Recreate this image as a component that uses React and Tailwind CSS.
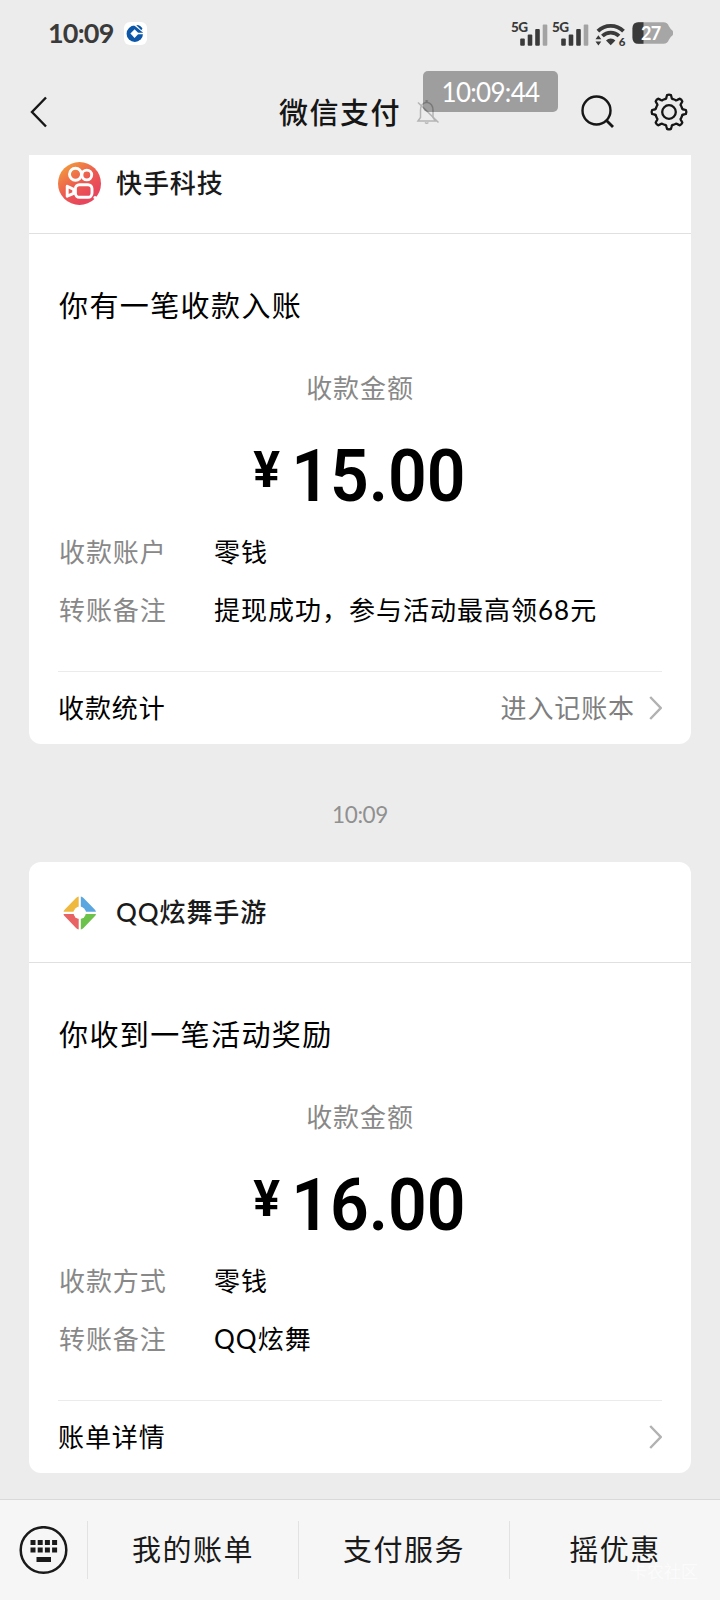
import { useState } from "react";

const messages = [
  {
    id: 1,
    brand: "kuaishou",
    name: "快手科技",
    title: "你有一笔收款入账",
    amount: "15.00",
    rows: [
      { label: "收款账户", value: "零钱" },
      { label: "转账备注", value: "提现成功，参与活动最高领68元" },
    ],
    footer: "收款统计",
    link: "进入记账本",
  },
  {
    id: 2,
    time: "10:09",
    brand: "qq",
    name: "QQ炫舞手游",
    title: "你收到一笔活动奖励",
    amount: "16.00",
    rows: [
      { label: "收款方式", value: "零钱" },
      { label: "转账备注", value: "QQ炫舞" },
    ],
    footer: "账单详情",
  },
];

const menus = ["我的账单", "支付服务", "摇优惠"];

// outline of the settings gear, 8 teeth around (20, 20)
function gearPath() {
  let d = "";
  for (let i = 0; i < 8; i++) {
    const at = (a, r) => {
      const t = ((i * 45 - 90 + a) * Math.PI) / 180;
      return `${(20 + r * Math.cos(t)).toFixed(2)} ${(20 + r * Math.sin(t)).toFixed(2)}`;
    };
    // tooth side, rounded tip, side, then the curved valley to the next tooth
    d += `${i === 0 ? "M" : "L"}${at(-9.5, 15.2)}L${at(-6.5, 17)}Q${at(0, 17.8)} ${at(6.5, 17)}L${at(9.5, 15.2)}Q${at(12, 13.2)} ${at(17, 13.6)}L${at(28, 13.6)}Q${at(33, 13.2)} ${at(35.5, 15.2)}`;
  }
  return `${d}Z`;
}

function Signal() {
  return (
    <svg width="41" height="28" viewBox="0 0 41 28" className="shrink-0">
      <text x="0" y="12.5" fontSize="13.5" fontWeight="900" fill="#3a3a3a" fontFamily="Lato, sans-serif" textLength="17">5G</text>
      <rect x="9.2" y="19.5" width="4.6" height="7.3" rx="1" fill="#3a3a3a" />
      <rect x="16.7" y="15.5" width="4.6" height="11.3" rx="1" fill="#3a3a3a" />
      <rect x="24.2" y="10" width="4.6" height="16.8" rx="1" fill="#3a3a3a" />
      <rect x="31.7" y="5.5" width="4.6" height="21.3" rx="1" fill="#a3a3a3" />
    </svg>
  );
}

function Wifi() {
  return (
    <svg width="32" height="30" viewBox="0 0 32 30" className="shrink-0">
      <g fill="none" stroke="#3a3a3a" strokeWidth="3.8">
        <path d="M2.9 13.2a18.2 18.2 0 0 1 25.6 0" />
        <path d="M7.4 18a11.8 11.8 0 0 1 16.6 0" />
      </g>
      <path d="M11 22.4a6.6 6.6 0 0 1 9.4 0l-4.7 4.8z" fill="#3a3a3a" />
      <path d="M0.5 21.2l2.9-3.9 2.9 3.9zM0.5 23.5l2.9 3.9 2.9-3.9z" fill="#3a3a3a" />
      <text x="23.8" y="28.3" fontSize="11.5" fontWeight="900" fill="#3a3a3a" fontFamily="Lato, sans-serif">6</text>
    </svg>
  );
}

function Battery() {
  return (
    <div className="relative w-[41px] h-[22px] shrink-0">
      <svg width="41" height="22" viewBox="0 0 41 22">
        <path d="M6.5 0.3h25q4 0 5.4 4l2 3q2.3 1 2.3 3.7t-2.3 3.7l-2 3q-1.4 4-5.4 4h-25q-6 0-6-6v-9.4q0-6 6-6z" fill="#a6a6a6" />
        <path d="M11.5 0.3h-5q-6 0-6 6v9.4q0 6 6 6h5z" fill="#3a3a3a" />
      </svg>
      <span className="absolute left-[9px] top-0 text-[18px] leading-[22px] tracking-[-0.6px] font-bold text-white font-['Lato',sans-serif]">27</span>
    </div>
  );
}

function BankIcon() {
  return (
    <svg width="23" height="23" viewBox="0 0 23 23">
      <rect width="23" height="23" rx="6" fill="#fff" />
      <circle cx="10.8" cy="11.8" r="8.2" fill="#0b56a6" />
      <path d="M10.6 7.3l4.2 4.3-4.2 4.3-4.2-4.3z" fill="#fff" />
      <path d="M10.5 2.6l8.5 7.2M14 11.6h6" stroke="#fff" strokeWidth="1.5" />
      <path d="M12.3 3q4.2-.3 6.2 3.8l-1.4 1.2z" fill="#0b56a6" />
    </svg>
  );
}

function MutedBell() {
  return (
    <svg width="24" height="26" viewBox="0 0 24 26" fill="none" stroke="#b4b4b4" strokeWidth="1.5">
      <path d="M2 22l2.5-3.5v-7q0-7.5 6.2-8.3q6.3.8 6.3 8.3v7l2.5 3.5zM9 23.5q1.7 1.5 3.4 0M9.5 2.5q1.2-1.5 2.4 0" />
      <path d="M2 3.5l20.5 20" />
    </svg>
  );
}

function BrandLogo({ brand }) {
  if (brand === "qq") {
    return (
      <svg width="44" height="44" viewBox="0 0 44 44">
        <path d="M20.7 5.5v15.2H5.5q.3-1.5 1.5-2.5L18 7q1.2-1.3 2.7-1.5z" fill="#efb93f" />
        <path d="M22.8 5.5v15.2H38q-.3-1.5-1.5-2.5L25.5 7q-1.2-1.3-2.7-1.5z" fill="#5ba6e0" />
        <path d="M20.7 38.5V22.9H5.5q.3 1.5 1.5 2.5L18 36.9q1.2 1.3 2.7 1.6z" fill="#e86464" />
        <path d="M22.8 38.5V22.9H38q-.3 1.5-1.5 2.5L25.5 36.9q-1.2 1.3-2.7 1.6z" fill="#6cc24a" />
        <circle cx="21.7" cy="21.8" r="6.2" fill="#fff" />
      </svg>
    );
  }
  return (
    <svg width="44" height="44" viewBox="0 0 44 44">
      <defs>
        <linearGradient id="ks" x1="0.1" y1="0.1" x2="0.65" y2="0.85">
          <stop offset="0" stopColor="#f29a3c" />
          <stop offset="0.6" stopColor="#ec5a50" />
          <stop offset="1" stopColor="#e8465c" />
        </linearGradient>
      </defs>
      <circle cx="21.5" cy="21.5" r="21.5" fill="url(#ks)" />
      <g fill="none" stroke="#fff" strokeWidth="2.9" strokeLinejoin="round">
        <circle cx="17.5" cy="12.3" r="6" />
        <circle cx="28.8" cy="13" r="4.9" />
        <rect x="17.4" y="22.7" width="16.6" height="12.6" rx="4" />
        <path d="M9.2 24.2l6.5 3.2v4l-6.5 2.8z" />
      </g>
      <circle cx="37" cy="35.5" r="1.6" fill="#fff" />
    </svg>
  );
}

function Chevron() {
  return (
    <svg width="14" height="24" viewBox="0 0 14 24" fill="none" stroke="#b2b2b2" strokeWidth="2.4">
      <path d="M2.2 1l10.5 11L2.2 23" />
    </svg>
  );
}

function PayCard({ msg }) {
  return (
    <div className="h-[611px] bg-white rounded-xl text-[26px] tracking-[0.9px] text-black flex flex-col">
      <div className="h-[101px] pt-px shrink-0 flex items-center gap-[15px] pl-[29px] border-b border-[#e0e0e0] text-[#1a1a1a]">
        <BrandLogo brand={msg.brand} />
        <span className="leading-10 -mt-px -ml-px font-medium">{msg.name}</span>
      </div>

      <div className="pl-[30px] mt-[52px] h-10 leading-10 text-[29px] tracking-[1.4px]">{msg.title}</div>
      <div className="mt-[42px] h-10 leading-10 text-center text-[#888]">收款金额</div>

      <div className="mt-[30px] h-[76px] flex justify-center font-['Roboto',sans-serif] tracking-normal">
        <span className="text-[50px] leading-[64px] font-bold mr-[11px]">¥</span>
        <span className="text-[73px] leading-[76px] font-semibold origin-right scale-x-93 -ml-[13px] mr-px">{msg.amount}</span>
      </div>

      <div className="mt-[9px] pl-[30px]">
        {msg.rows.map(row => (
          <div key={row.label} className="flex h-[58px] leading-[58px]">
            <span className="w-[155px] text-[#888]">{row.label}</span>
            <span className="tracking-[1px]">{row.value}</span>
          </div>
        ))}
      </div>

      <div className="mx-[29px] mt-auto h-[73px] shrink-0 border-t border-[#ebebeb] flex items-center justify-between">
        <span className="leading-10">{msg.footer}</span>
        <div className="flex items-center gap-[13px] text-[#7f7f7f]">
          {msg.link && <span className="leading-10">{msg.link}</span>}
          <Chevron />
        </div>
      </div>
    </div>
  );
}

export default function App() {
  const [list] = useState(messages);

  return (
    <div className="w-[720px] h-[1600px] bg-[#ececec] overflow-hidden flex flex-col font-['Lato','Noto_Sans_CJK_SC',sans-serif]">
      {/* Status bar */}
      <div className="h-[66px] shrink-0 flex items-center justify-between pl-[48px] pr-[47px]">
        <div className="flex items-center gap-[10px]">
          <span className="text-[27px] leading-8 tracking-[-0.8px] font-bold text-[#3a3a3a] w-[66px]">10:09</span>
          <BankIcon />
        </div>
        <div className="flex items-center">
          <Signal />
          <Signal />
          <div className="ml-0.5">
            <Wifi />
          </div>
          <div className="ml-[5px]">
            <Battery />
          </div>
        </div>
      </div>

      {/* Nav bar */}
      <div className="relative h-[89px] pt-[3px] shrink-0 flex items-center justify-between pl-[29px] pr-[31px] text-[#161616]">
        <svg width="20" height="32" viewBox="0 0 20 32" fill="none" stroke="currentColor" strokeWidth="2.4">
          <path d="M17 1.5L3 16L17 30.5" />
        </svg>
        <h1 className="absolute left-[279px] top-[27px] text-[29px] leading-10 tracking-[1.5px] font-medium">微信支付</h1>
        <div className="absolute left-[416px] top-[33px]">
          <MutedBell />
        </div>
        <div className="absolute left-[423px] top-[5px] w-[135px] h-[41px] rounded-[5px] bg-black/33 text-white text-[26px] leading-[42px] tracking-[-0.7px] text-center">
          10:09:44
        </div>
        <div className="flex items-center gap-[33px]">
          <svg width="36" height="36" viewBox="0 0 36 36" fill="none" stroke="currentColor" strokeWidth="2.4">
            <circle cx="16.5" cy="16.5" r="14" />
            <path d="M26.5 26.5l6.5 6.5" strokeWidth="2.8" />
          </svg>
          <svg width="40" height="40" viewBox="0 0 40 40" fill="none" stroke="currentColor" strokeWidth="2.3" strokeLinejoin="round">
            <path d={gearPath()} />
            <circle cx="20" cy="20" r="6.8" />
          </svg>
        </div>
      </div>

      {/* Messages */}
      <div className="flex-1 min-h-0 overflow-hidden px-[29px]">
        <div className="-mt-[22px]">
          {list.map(msg => (
            <div key={msg.id}>
              {msg.time && (
                <div className="h-[118px] pt-[55px] leading-8 text-center text-[22.5px] tracking-[-0.4px] text-[#909090]">{msg.time}</div>
              )}
              <PayCard msg={msg} />
            </div>
          ))}
        </div>
      </div>

      {/* Bottom menu */}
      <div className="relative h-[101px] shrink-0 bg-[#f6f6f6] border-t border-[#d9d9d9] flex items-center text-[#1a1a1a]">
        <div className="w-[87px] pl-[19px]">
          <svg width="49" height="49" viewBox="0 0 49 49">
            <circle cx="24.5" cy="24" r="22.8" fill="none" stroke="currentColor" strokeWidth="2.5" />
            {[11.5, 18.7, 25.9, 33.1].map(x => (
              <g key={x} fill="currentColor">
                <rect x={x} y="14" width="5" height="5" />
                <rect x={x} y="21.5" width="5" height="5" />
              </g>
            ))}
            <rect x="17.5" y="31" width="14.5" height="5" fill="currentColor" />
          </svg>
        </div>
        {menus.map(item => (
          <div key={item} className="flex-1 h-[58px] border-l border-[#e2e2e2] leading-[58px] text-center text-[29px] tracking-[1.5px]">
            {item}
          </div>
        ))}
        <span className="absolute right-[22px] bottom-[18px] text-[17px] leading-5 text-white/60">卡农社区</span>
      </div>
    </div>
  );
}
